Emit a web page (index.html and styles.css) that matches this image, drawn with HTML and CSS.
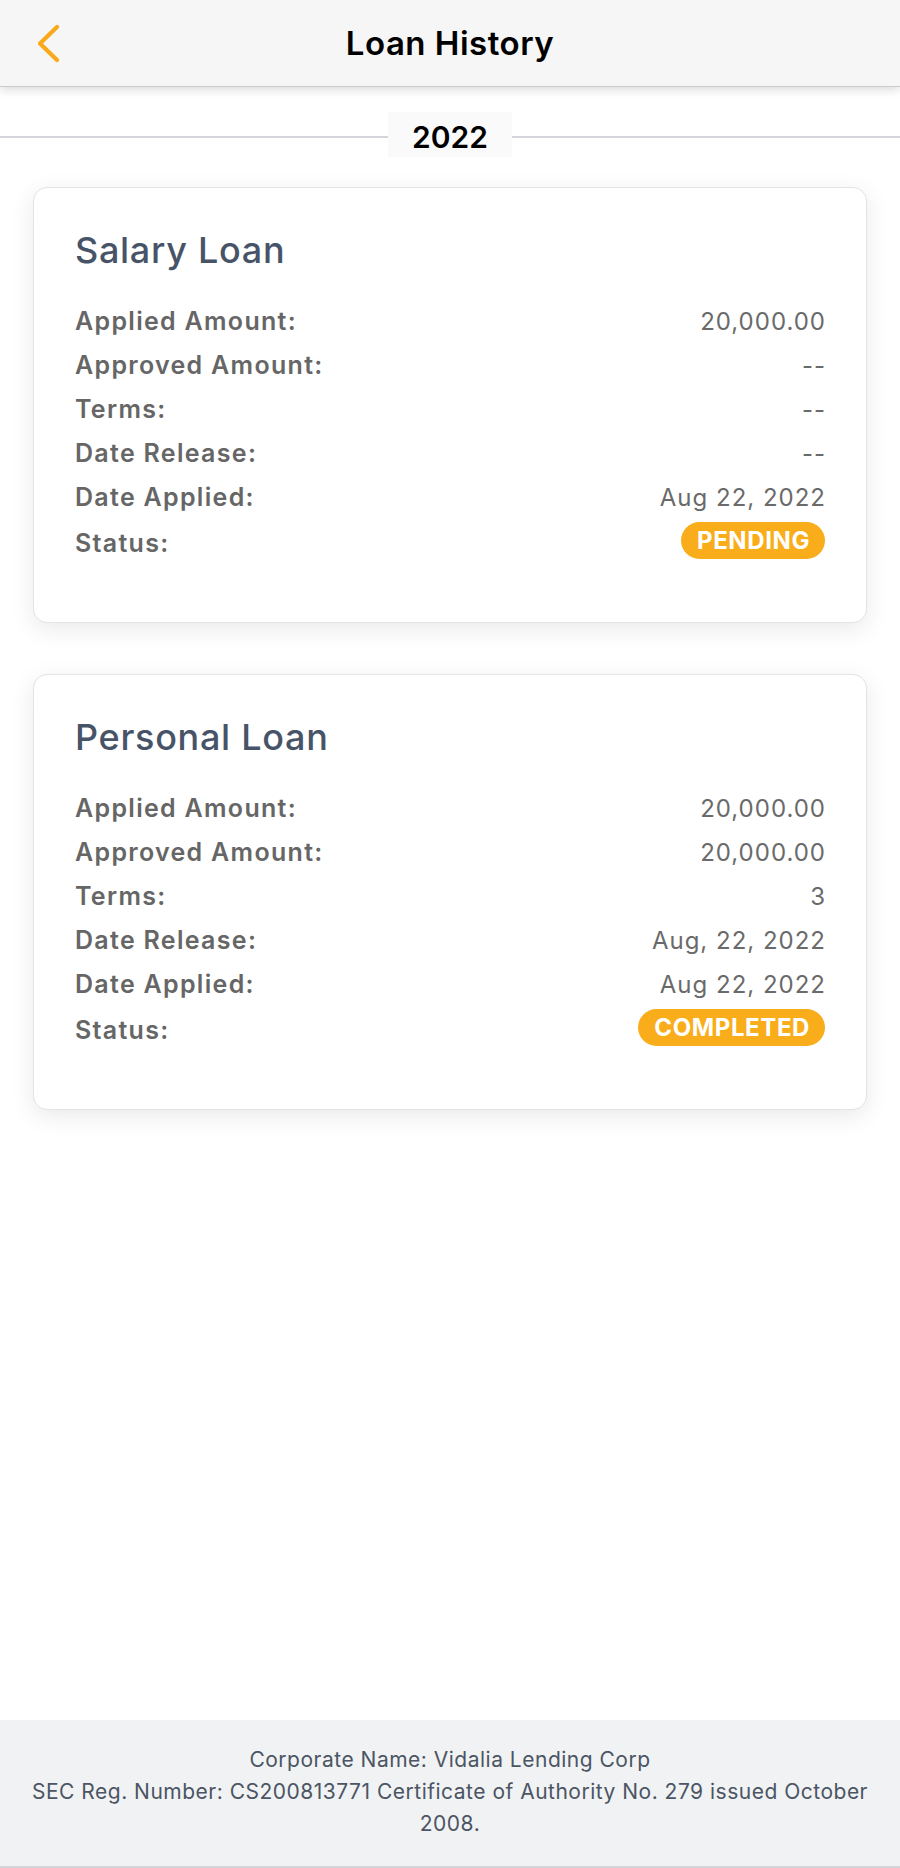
FILE: index.html
```html
<!DOCTYPE html>
<html lang="en">
<head>
<meta charset="utf-8">
<title>Loan History</title>
<link rel="stylesheet" href="styles.css">
</head>
<body>
<div class="page">
  <header class="topbar">
    <button class="back" aria-label="Back">
      <svg width="24" height="40" viewBox="0 0 24 40"><polyline points="19,3 2,19.5 19,36" fill="none" stroke="#f9a91a" stroke-width="4.2" stroke-linecap="round" stroke-linejoin="round"/></svg>
    </button>
    <h1 class="title">Loan History</h1>
  </header>

  <main class="content">
    <div class="year-row">
      <span class="year-line"></span>
      <span class="year">2022</span>
      <span class="year-line"></span>
    </div>

    <section class="cards">
      <article class="card">
        <h2 class="card-title">Salary Loan</h2>
        <div class="row"><span class="label">Applied Amount:</span><span class="value">20,000.00</span></div>
        <div class="row"><span class="label">Approved Amount:</span><span class="value">--</span></div>
        <div class="row"><span class="label">Terms:</span><span class="value">--</span></div>
        <div class="row"><span class="label">Date Release:</span><span class="value">--</span></div>
        <div class="row"><span class="label">Date Applied:</span><span class="value">Aug 22, 2022</span></div>
        <div class="row status"><span class="label">Status:</span><span class="badge">PENDING</span></div>
      </article>

      <article class="card">
        <h2 class="card-title">Personal Loan</h2>
        <div class="row"><span class="label">Applied Amount:</span><span class="value">20,000.00</span></div>
        <div class="row"><span class="label">Approved Amount:</span><span class="value">20,000.00</span></div>
        <div class="row"><span class="label">Terms:</span><span class="value">3</span></div>
        <div class="row"><span class="label">Date Release:</span><span class="value">Aug, 22, 2022</span></div>
        <div class="row"><span class="label">Date Applied:</span><span class="value">Aug 22, 2022</span></div>
        <div class="row status"><span class="label">Status:</span><span class="badge">COMPLETED</span></div>
      </article>
    </section>
  </main>

  <footer class="footer">
    <p>Corporate Name: Vidalia Lending Corp<br>SEC Reg. Number: CS200813771 Certificate of Authority No. 279 issued October 2008.</p>
  </footer>
</div>
</body>
</html>
```
FILE: styles.css
```css
* { box-sizing: border-box; }

html, body {
  margin: 0;
  padding: 0;
  background: #ffffff;
}

body {
  font-family: Inter, "Noto Sans", "Liberation Sans", sans-serif;
}

.page {
  min-height: 1868px;
  display: flex;
  flex-direction: column;
}

.topbar {
  position: relative;
  height: 87px;
  background: #f6f6f6;
  border-bottom: 1px solid #cbcbcb;
  box-shadow: 0 3px 9px rgba(0, 0, 0, 0.14);
  display: flex;
  align-items: center;
  justify-content: center;
}

.back {
  position: absolute;
  left: 38px;
  top: 24px;
  width: 24px;
  height: 40px;
  padding: 0;
  border: 0;
  background: transparent;
  display: flex;
}

.title {
  margin: 0;
  font-size: 33px;
  font-weight: 600;
  color: #000;
  letter-spacing: 0.5px;
}

.content {
  flex: 1;
}

.year-row {
  display: flex;
  align-items: center;
  margin-top: 25px;
  height: 45px;
}

.year-line {
  flex: 1;
  height: 2px;
  background: #d4d6db;
  margin-top: 4px;
}

.year {
  width: 124px;
  height: 45px;
  background: #fafafa;
  display: flex;
  align-items: center;
  justify-content: center;
  font-size: 30px;
  font-weight: 600;
  color: #000;
  padding-top: 4px;
}

.cards {
  display: flex;
  flex-direction: column;
  gap: 51px;
  padding: 30px 33px 0;
}

.card {
  background: #fff;
  border: 1px solid #e3e3e8;
  border-radius: 14px;
  box-shadow: 0 6px 24px rgba(0, 0, 0, 0.09);
  padding: 36px 41px 56px;
}

.card-title {
  margin: 0 0 23px;
  font-size: 36px;
  line-height: 52px;
  font-weight: 500;
  letter-spacing: 0.7px;
  color: #475467;
}

.row {
  display: flex;
  justify-content: space-between;
  align-items: center;
  height: 44px;
  font-size: 24px;
  letter-spacing: 1px;
}

.row.status {
  height: 46px;
  margin-top: 1px;
}

.label {
  font-weight: 600;
  font-size: 25px;
  letter-spacing: 1.3px;
  color: #666666;
}

.value {
  font-weight: 400;
  color: #6a6a6a;
  margin-right: -1px;
}

.badge {
  display: inline-flex;
  align-items: center;
  height: 37px;
  padding: 0 15px 0 16px;
  border-radius: 19px;
  background: #f9ad1b;
  color: #fff;
  font-weight: 700;
  font-size: 24px;
  letter-spacing: 0.6px;
  margin-top: -6px;
}

.footer {
  background: #f1f2f4;
  border-bottom: 2px solid #d4d6db;
  padding: 24px 10px 26px;
  text-align: center;
}

.footer p {
  margin: 0;
  font-size: 21px;
  line-height: 32px;
  letter-spacing: 0.5px;
  color: #4b5563;
}
```
